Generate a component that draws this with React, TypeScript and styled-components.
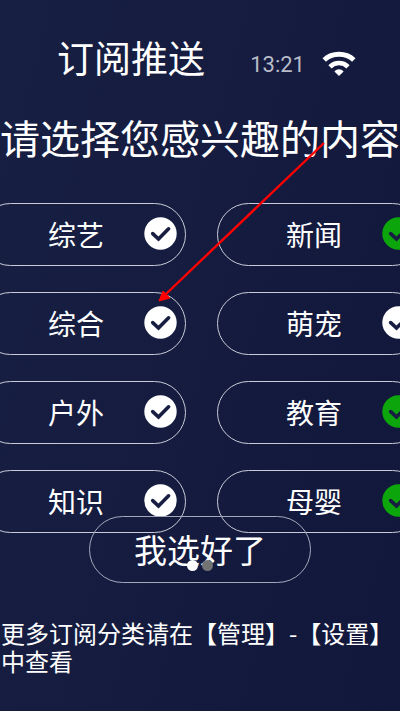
import React, { useState } from "react";
import styled, { createGlobalStyle } from "styled-components";

const GlobalStyle = createGlobalStyle`
  * { box-sizing: border-box; }
  html, body { margin: 0; background: #131a3d; }
  body { overflow-x: hidden; }
`;

const Page = styled.main`
  position: relative;
  min-height: 100vh;
  overflow: hidden;
  padding-top: 33px;
  color: #fff;
  font-family: "Noto Sans CJK SC", sans-serif;
  background: linear-gradient(105deg, #171f42 0%, #151c40 45%, #12193d 75%, #11183b 100%);
`;

const Header = styled.header`
  display: flex;
  align-items: center;
  height: 48px;
  padding: 0 44px 0 57px;
`;

const Title = styled.h1`
  margin: 0;
  font-size: 37px;
  line-height: 48px;
  font-weight: 400;
  white-space: nowrap;
`;

const Status = styled.div`
  display: flex;
  align-items: center;
  gap: 17px;
  margin-left: auto;
  padding-top: 12px;
`;

const Clock = styled.time`
  padding-top: 3px;
  color: #b9bbc8;
  font-family: Roboto, sans-serif;
  font-size: 22px;
  line-height: 28px;
`;

const Question = styled.h2`
  margin: 28px 0 0;
  font-size: 40px;
  line-height: 56px;
  font-weight: 400;
  text-align: center;
  white-space: nowrap;
`;

const TopicGrid = styled.div`
  display: grid;
  grid-template-columns: 207px 207px;
  justify-content: center;
  gap: 26px 31px;
  margin-top: 38px;
  padding-left: 3px;
`;

const Topic = styled.label`
  position: relative;
  display: flex;
  align-items: center;
  justify-content: space-between;
  height: 63px;
  padding: 0 8px 2px 68px;
  border: 1px solid #c9ccd8;
  border-radius: 32px;
  font-size: 28px;
  line-height: 40px;
  cursor: pointer;
`;

const Checkbox = styled.input`
  position: absolute;
  inset: 0;
  width: 100%;
  height: 100%;
  margin: 0;
  opacity: 0;
  cursor: pointer;
`;

const Badge = styled.svg<{ $on: boolean }>`
  flex: none;
  width: 33px;
  height: 33px;
  color: ${(p) => (p.$on ? "#0ca60c" : "#fff")};
`;

const Done = styled.button`
  position: relative;
  display: block;
  width: 222px;
  height: 67px;
  margin: -17px auto 0;
  padding: 0 0 2px;
  border: 1px solid #a4a8bb;
  border-radius: 34px;
  background: transparent;
  color: #fff;
  font-family: inherit;
  font-size: 33px;
  line-height: 48px;
  cursor: pointer;
`;

const Dots = styled.span`
  position: absolute;
  inset: auto 0 11px;
  display: flex;
  justify-content: center;
  gap: 4px;
`;

const Dot = styled.span<{ $active?: boolean }>`
  width: 11px;
  height: 11px;
  border-radius: 50%;
  background: ${(p) => (p.$active ? "#fff" : "#737373")};
`;

const Note = styled.p`
  margin: 36px 0 0;
  padding-left: 1px;
  font-size: 24px;
  line-height: 28px;
`;

const Arrow = styled.svg`
  position: absolute;
  top: 142px;
  left: 50%;
  width: 168px;
  height: 160px;
  margin-left: -42px;
  pointer-events: none;
`;

const initialTopics = [
  { name: "综艺", on: false },
  { name: "新闻", on: true },
  { name: "综合", on: false },
  { name: "萌宠", on: false },
  { name: "户外", on: false },
  { name: "教育", on: true },
  { name: "知识", on: false },
  { name: "母婴", on: true },
];

function WifiIcon() {
  return (
    <svg width="34" height="25" viewBox="0 0 34 25" fill="none" stroke="#fff" strokeWidth="5" aria-label="Wi-Fi">
      <path d="M2.200 9C10.300 1.400 23.700 1.400 31.800 9" />
      <path d="M8 15.800C13 10.800 21 10.800 26 15.800" strokeWidth="4.600" />
      <path d="M12.400 20.400C15 17.600 19 17.600 21.600 20.400L17 25Z" fill="#fff" stroke="none" />
    </svg>
  );
}

export default function App() {
  const [topics, setTopics] = useState(initialTopics);
  const toggle = (name: string) =>
    setTopics((list) => list.map((t) => (t.name === name ? { ...t, on: !t.on } : t)));

  return (
    <Page>
      <GlobalStyle />
      <Header>
        <Title>订阅推送</Title>
        <Status>
          <Clock>13:21</Clock>
          <WifiIcon />
        </Status>
      </Header>
      <Question>请选择您感兴趣的内容</Question>
      <TopicGrid>
        {topics.map((t) => (
          <Topic key={t.name}>
            <Checkbox type="checkbox" checked={t.on} onChange={() => toggle(t.name)} />
            <span>{t.name}</span>
            <Badge $on={t.on} viewBox="0 0 33 33" aria-hidden="true">
              <circle cx="16.5" cy="16.5" r="16.2" fill="currentColor" />
              <path d="M8.7 16.6L14.5 22L24.6 11.8" fill="none" stroke="#171e42" strokeWidth="3.6" strokeLinecap="round" />
            </Badge>
          </Topic>
        ))}
      </TopicGrid>
      <Done type="button">
        我选好了
        <Dots>
          <Dot $active />
          <Dot />
        </Dots>
      </Done>
      <Note>更多订阅分类请在【管理】-【设置】中查看</Note>
      <Arrow viewBox="0 0 168 160" aria-hidden="true">
        <path d="M166 1L8 152" stroke="#f00" strokeWidth="2.4" />
        <path d="M1 159L5 149L12 156Z" fill="#f00" stroke="#f00" strokeWidth="1" />
      </Arrow>
    </Page>
  );
}
